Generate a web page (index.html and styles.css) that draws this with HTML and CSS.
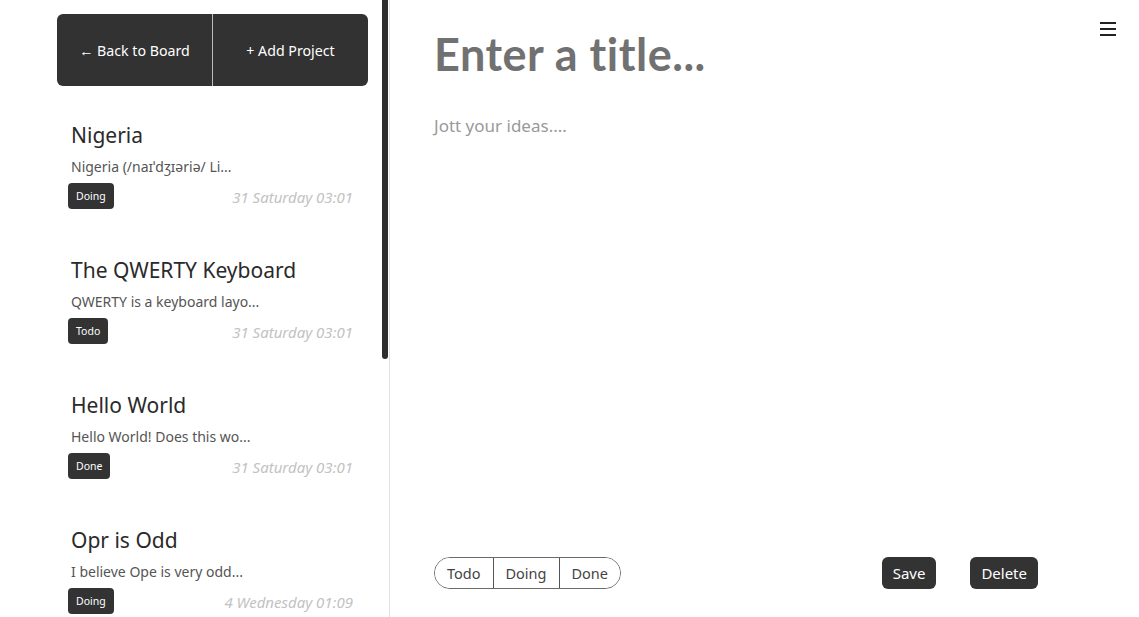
FILE: index.html
```html
<!DOCTYPE html>
<html lang="en">
<head>
<meta charset="utf-8">
<title>Jott</title>
<link rel="stylesheet" href="styles.css">
</head>
<body>
<div class="app">
  <aside class="sidebar">
    <div class="sidebar-scroll">
      <div class="toolbar">
        <button class="tool-btn">← Back to Board</button>
        <button class="tool-btn">+ Add Project</button>
      </div>
      <ul class="cards">
        <li class="card">
          <div class="card-title">Nigeria</div>
          <div class="card-desc">Nigeria (/naɪˈdʒɪəriə/ Li...</div>
          <div class="card-meta"><span class="badge">Doing</span><span class="date">31 Saturday 03:01</span></div>
        </li>
        <li class="card">
          <div class="card-title">The QWERTY Keyboard</div>
          <div class="card-desc">QWERTY is a keyboard layo...</div>
          <div class="card-meta"><span class="badge">Todo</span><span class="date">31 Saturday 03:01</span></div>
        </li>
        <li class="card">
          <div class="card-title">Hello World</div>
          <div class="card-desc">Hello World! Does this wo...</div>
          <div class="card-meta"><span class="badge">Done</span><span class="date">31 Saturday 03:01</span></div>
        </li>
        <li class="card">
          <div class="card-title">Opr is Odd</div>
          <div class="card-desc">I believe Ope is very odd...</div>
          <div class="card-meta"><span class="badge">Doing</span><span class="date">4 Wednesday 01:09</span></div>
        </li>
      </ul>
    </div>
    <div class="scroll-thumb"></div>
  </aside>
  <main class="editor">
    <button class="menu-btn" aria-label="Menu"><span></span><span></span><span></span></button>
    <div class="title">Enter a title...</div>
    <div class="body">Jott your ideas....</div>
    <div class="footer">
      <div class="status">
        <button class="seg">Todo</button>
        <button class="seg">Doing</button>
        <button class="seg">Done</button>
      </div>
      <div class="actions">
        <button class="action">Save</button>
        <button class="action">Delete</button>
      </div>
    </div>
  </main>
</div>
</body>
</html>
```
FILE: styles.css
```css
* { box-sizing: border-box; }
html, body { margin: 0; padding: 0; height: 100%; }
body {
  font-family: "Noto Sans", "Open Sans", sans-serif;
  background: #fff;
  color: #333;
}
button { font-family: inherit; cursor: pointer; }

.app {
  display: flex;
  height: 100vh;
}

.sidebar {
  position: relative;
  width: 390px;
  flex: none;
  height: 100vh;
  overflow: hidden;
  border-right: 1px solid #e2e2e2;
}
.sidebar-scroll {
  height: 100%;
  overflow: hidden;
  padding-right: 6px;
}
.scroll-thumb {
  position: absolute;
  top: 0;
  right: 1px;
  width: 6px;
  height: 359px;
  background: #2e2e2e;
  border-radius: 0 0 3px 3px;
}

.toolbar {
  display: flex;
  height: 72px;
  margin: 14px 15px 0 57px;
  background: #323232;
  border-radius: 6px;
  overflow: hidden;
}
.tool-btn {
  flex: 1;
  border: none;
  background: transparent;
  color: #fff;
  font-size: 14.2px;
  padding: 0;
}
.tool-btn + .tool-btn { border-left: 1px solid #bdbdbd; }

.cards {
  list-style: none;
  margin: 0 15px 0 57px;
  padding: 0;
}
.card {
  padding: 35px 15px 12px 11px;
}
.card-title {
  font-size: 21px;
  line-height: 28px;
  color: #2a2a2a;
  padding-left: 3px;
}
.card-desc {
  font-size: 14px;
  line-height: 20px;
  color: #555;
  margin-top: 8px;
  padding-left: 3px;
}
.card-meta {
  display: flex;
  align-items: center;
  justify-content: space-between;
  margin-top: 6px;
}
.badge {
  display: inline-flex;
  align-items: center;
  height: 26px;
  padding: 0 8px;
  background: #333;
  color: #fff;
  font-size: 10.5px;
  border-radius: 4px;
}
.date {
  font-size: 15px;
  font-style: italic;
  color: #c2c2c2;
  padding-top: 2px;
}

.editor {
  position: relative;
  flex: 1;
  display: flex;
  flex-direction: column;
  padding: 26px 101px 28px 44px;
}
.menu-btn {
  position: absolute;
  top: 22px;
  right: 23px;
  width: 16px;
  display: flex;
  flex-direction: column;
  gap: 4px;
  border: none;
  background: none;
  padding: 0;
}
.menu-btn span {
  display: block;
  width: 16px;
  height: 2px;
  background: #222;
}
.title {
  font-family: "Lato", sans-serif;
  font-weight: 700;
  font-size: 45px;
  letter-spacing: 0.5px;
  line-height: 56px;
  color: #717171;
}
.body {
  flex: 1;
  margin-top: 32px;
  font-size: 17px;
  line-height: 24px;
  color: #999;
}
.footer {
  display: flex;
  align-items: center;
}
.status {
  display: flex;
  height: 32px;
  border: 1px solid #6a6a6a;
  border-radius: 16px;
  overflow: hidden;
}
.seg {
  border: none;
  background: #fff;
  color: #444;
  font-size: 14.5px;
  padding: 0 12px;
}
.seg + .seg { border-left: 1px solid #555; }
.actions {
  margin-left: auto;
  display: flex;
  gap: 34px;
}
.action {
  height: 32px;
  padding: 0 11px;
  border: none;
  border-radius: 6px;
  background: #333;
  color: #fff;
  font-size: 15px;
}
```
